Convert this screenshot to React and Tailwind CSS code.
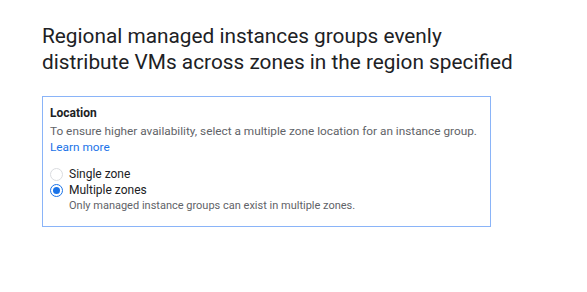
import React from 'react';

const Radio = ({ checked, label }) => (
    <label className="flex items-center gap-[6px] h-[16px]">
        {checked ? (
            <span className="w-[13px] h-[13px] rounded-full border-[1.5px] border-[#1a73e8] flex items-center justify-center">
                <span className="w-[7px] h-[7px] rounded-full bg-[#1a73e8]" />
            </span>
        ) : (
            <span className="w-[13px] h-[13px] rounded-full border border-[#dadce0] bg-white" />
        )}
        <span className="text-[12px] text-[#202124]">{label}</span>
    </label>
);

const App = () => {
    return (
        <div className="w-[587px] h-[292px] bg-white" style={{ fontFamily: 'Roboto, "Liberation Sans", sans-serif' }}>
            <div className="pt-[23px] pl-[42px]">
                {/* Heading */}
                <h1 className="text-[20.8px] leading-[26px] text-[#202124] font-normal">
                    Regional managed instances groups evenly
                    <br />
                    distribute VMs across zones in the region specified
                </h1>

                {/* Location card */}
                <div className="mt-[21px] w-[449px] h-[131px] border-[1.5px] border-[#8ab4f8] px-[7px] pt-[8px]">
                    <p className="text-[12px] font-bold text-[#202124] leading-[16px]">Location</p>
                    <p className="mt-[2px] text-[11.8px] text-[#5f6368] leading-[16px]">
                        To ensure higher availability, select a multiple zone location for an instance group.
                    </p>
                    <a className="text-[11.8px] text-[#1a73e8] leading-[16px] block">Learn more</a>

                    <div className="mt-[11px] flex flex-col">
                        <Radio label="Single zone" />
                        <Radio checked label="Multiple zones" />
                        <p className="pl-[19px] text-[11px] text-[#5f6368] leading-[16px]">
                            Only managed instance groups can exist in multiple zones.
                        </p>
                    </div>
                </div>
            </div>
        </div>
    );
};

export default App;
